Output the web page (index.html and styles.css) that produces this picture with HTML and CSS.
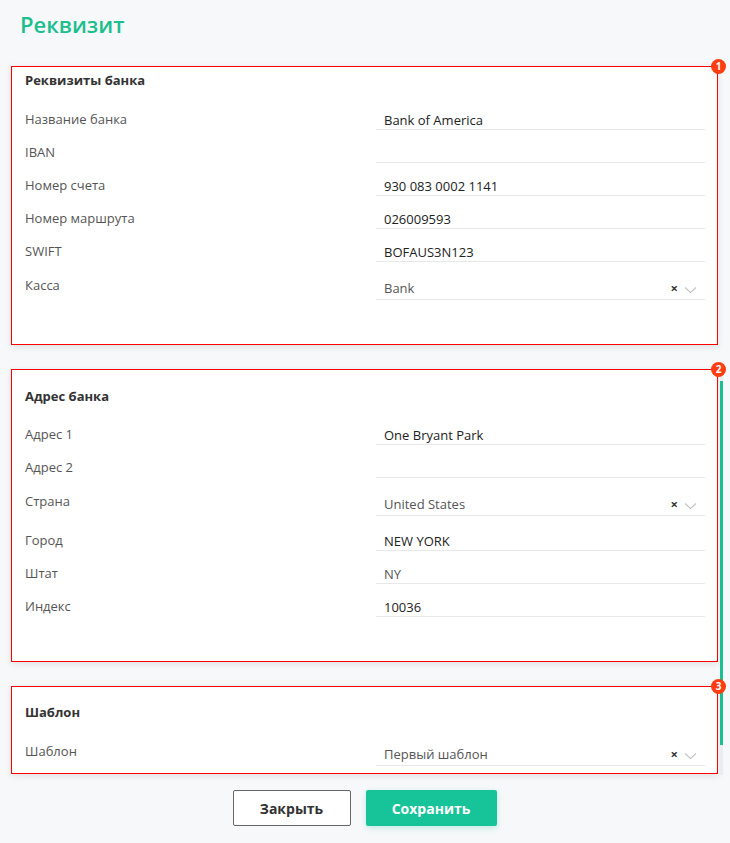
FILE: index.html
```html
<!DOCTYPE html>
<html lang="ru">
<head>
<meta charset="utf-8">
<title>Реквизит</title>
<link rel="stylesheet" href="styles.css">
</head>
<body>
<div class="page">
  <h1 class="title">Реквизит</h1>

  <section class="card card-bank">
    <span class="badge">1</span>
    <h2 class="card-title">Реквизиты банка</h2>
    <div class="row"><div class="label">Название банка</div><div class="field">Bank of America</div></div>
    <div class="row"><div class="label">IBAN</div><div class="field"></div></div>
    <div class="row"><div class="label">Номер счета</div><div class="field">930 083 0002 1141</div></div>
    <div class="row"><div class="label">Номер маршрута</div><div class="field">026009593</div></div>
    <div class="row"><div class="label">SWIFT</div><div class="field">BOFAUS3N123</div></div>
    <div class="row row-select"><div class="label">Касса</div><div class="field select"><span class="sel-val">Bank</span><span class="clear">×</span><svg class="chev" width="13" height="8" viewBox="0 0 13 8"><path d="M1 1.5 L6.5 6.5 L12 1.5" fill="none" stroke="#c4c4c4" stroke-width="1.1"/></svg></div></div>
  </section>

  <section class="card card-addr">
    <span class="badge">2</span>
    <h2 class="card-title">Адрес банка</h2>
    <div class="row"><div class="label">Адрес 1</div><div class="field">One Bryant Park</div></div>
    <div class="row"><div class="label">Адрес 2</div><div class="field"></div></div>
    <div class="row row-select"><div class="label">Страна</div><div class="field select"><span class="sel-val">United States</span><span class="clear">×</span><svg class="chev" width="13" height="8" viewBox="0 0 13 8"><path d="M1 1.5 L6.5 6.5 L12 1.5" fill="none" stroke="#c4c4c4" stroke-width="1.1"/></svg></div></div>
    <div class="row"><div class="label">Город</div><div class="field">NEW YORK</div></div>
    <div class="row"><div class="label">Штат</div><div class="field muted">NY</div></div>
    <div class="row"><div class="label">Индекс</div><div class="field">10036</div></div>
  </section>

  <section class="card card-tpl">
    <span class="badge">3</span>
    <h2 class="card-title">Шаблон</h2>
    <div class="row row-select"><div class="label">Шаблон</div><div class="field select"><span class="sel-val">Первый шаблон</span><span class="clear">×</span><svg class="chev" width="13" height="8" viewBox="0 0 13 8"><path d="M1 1.5 L6.5 6.5 L12 1.5" fill="none" stroke="#c4c4c4" stroke-width="1.1"/></svg></div></div>
  </section>

  <div class="actions">
    <button class="btn btn-close">Закрыть</button>
    <button class="btn btn-save">Сохранить</button>
  </div>

  <div class="scrollbar"><div class="thumb"></div></div>
</div>
</body>
</html>
```

FILE: styles.css
```css
html, body {
  margin: 0;
  padding: 0;
  background: #f7f8fa;
}
body {
  font-family: "Open Sans", "Noto Sans", sans-serif;
  color: #222;
}
.page {
  position: relative;
  padding: 8px 12px 0 11px;
  width: 730px;
  height: 843px;
  box-sizing: border-box;
}
.title {
  margin: 0 0 26px 9px;
  font-size: 22px;
  line-height: 32px;
  font-weight: 600;
  color: #1dbf8e;
}
.card {
  position: relative;
  background: #fff;
  border: 1px solid #ff0000;
  box-shadow: 0 2px 7px rgba(0, 0, 0, 0.1);
  padding: 0 12px 0 13px;
  margin-bottom: 24px;
}
.card-bank { padding-top: 4px; padding-bottom: 42px; }
.card-addr { padding-top: 17px; padding-bottom: 44px; }
.card-tpl { padding-top: 16px; padding-bottom: 5px; margin-bottom: 16px; }
.card-title {
  margin: 0 0 7px 0;
  font-size: 13px;
  line-height: 18px;
  font-weight: 700;
  color: #333;
}
.card-bank .card-title { margin-bottom: 8px; }
.badge {
  position: absolute;
  z-index: 2;
  top: -8px;
  right: -9px;
  width: 15px;
  height: 15px;
  border-radius: 50%;
  background: #ff3d12;
  color: #fff;
  font-size: 10px;
  line-height: 15px;
  font-weight: 700;
  text-align: center;
}
.row {
  display: flex;
  align-items: flex-start;
}
.label {
  width: 351px;
  flex: none;
  margin-top: 13px;
  font-size: 13px;
  line-height: 18px;
  color: #555;
}
.row-select .label { margin-top: 14px; }
.field {
  flex: 1;
  height: 18px;
  padding: 14px 0 0 8px;
  border-bottom: 1px solid #e8e8e8;
  font-size: 13px;
  line-height: 18px;
  color: #222;
}
.field.muted { color: #555; }
.row-select { margin-bottom: 2px; }
.row-select .field {
  padding: 17px 8px 2px 8px;
  display: flex;
  align-items: center;
}
.sel-val {
  flex: 1;
  color: #555;
}
.clear {
  font-size: 13px;
  font-weight: 700;
  color: #333;
  margin-right: 6px;
  line-height: 18px;
}
.chev { display: block; margin-top: 3px; }
.actions {
  display: flex;
  justify-content: center;
  gap: 15px;
}
.btn {
  height: 36px;
  font-family: "Open Sans", "Noto Sans", sans-serif;
  font-size: 14px;
  font-weight: 700;
  border-radius: 2px;
  cursor: pointer;
}
.btn-close {
  width: 118px;
  background: #fff;
  color: #333;
  border: 1px solid #666;
}
.btn-save {
  width: 131px;
  background: #17c398;
  color: #fff;
  border: none;
  box-shadow: 0 2px 6px rgba(23, 195, 152, 0.25);
}
.scrollbar {
  position: absolute;
  z-index: 1;
  left: 720px;
  top: 377px;
  width: 3px;
  height: 398px;
  background: #ececec;
}
.thumb {
  margin-top: 4px;
  height: 364px;
  background: #1dbf8e;
}
```
